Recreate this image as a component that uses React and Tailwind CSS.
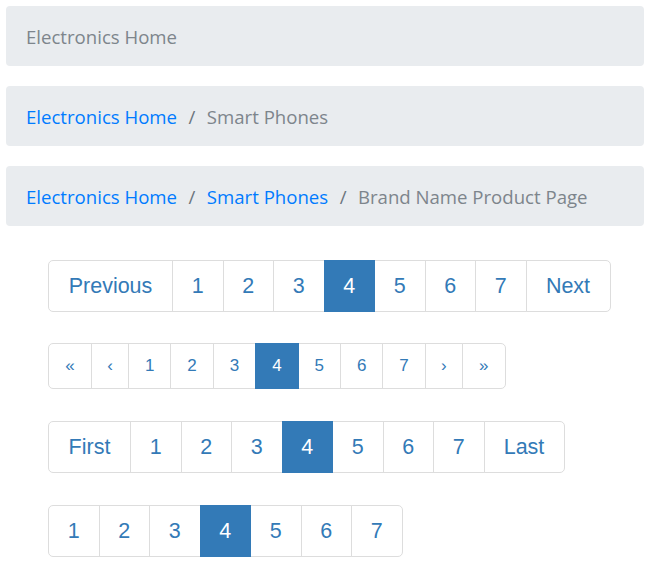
import React from 'react';

const crumbFont = { fontFamily: '"Open Sans", "Noto Sans", sans-serif' };

function Breadcrumb({ items }) {
    return (
        <nav className="h-[60px] rounded-[4px] bg-[#e9ecef] px-5 pt-[2px] flex items-center text-[18.6px]" style={crumbFont}>
            {items.map((item, i) => {
                const last = i === items.length - 1;
                return (
                    <React.Fragment key={item}>
                        {i > 0 && <span className="px-[11.5px] text-[#6c757d]">/</span>}
                        <span className={last ? 'text-[#7d858c]' : 'text-[#007bff]'}>{item}</span>
                    </React.Fragment>
                );
            })}
        </nav>
    );
}

function Pager({ items, height, textSize }) {
    return (
        <ul className={`flex ${height} ${textSize} text-[#337ab7]`} style={{ fontFamily: '"Liberation Sans", Arial, sans-serif' }}>
            {items.map((it, i) => {
                const first = i === 0;
                const last = i === items.length - 1;
                return (
                    <li
                        key={i}
                        className={[
                            'flex items-center justify-center border shrink-0',
                            it.w,
                            i > 0 ? '-ml-px' : '',
                            first ? 'rounded-l-[5px]' : '',
                            last ? 'rounded-r-[5px]' : '',
                            it.active
                                ? 'bg-[#337ab7] border-[#337ab7] text-white relative z-10'
                                : 'bg-white border-[#dddddd]',
                        ].join(' ')}
                    >
                        {it.label}
                    </li>
                );
            })}
        </ul>
    );
}

const nums = (w) =>
    [1, 2, 3, 4, 5, 6, 7].map((n) => ({ label: String(n), w, active: n === 4 }));

export default function App() {
    return (
        <div className="bg-white min-h-screen pt-[6px] px-[6px]">
            <div className="w-[638px] flex flex-col gap-5">
                <Breadcrumb items={['Electronics Home']} />
                <Breadcrumb items={['Electronics Home', 'Smart Phones']} />
                <Breadcrumb items={['Electronics Home', 'Smart Phones', 'Brand Name Product Page']} />
            </div>

            <div className="pl-[42px] pt-[34px] flex flex-col">
                <Pager
                    height="h-[52px]"
                    textSize="text-[21.5px]"
                    items={[
                        { label: 'Previous', w: 'w-[125px]' },
                        ...nums('w-[51.5px]'),
                        { label: 'Next', w: 'w-[85px]' },
                    ]}
                />
                <div className="mt-[31px]">
                    <Pager
                        height="h-[46px]"
                        textSize="text-[17px]"
                        items={[
                            { label: '«', w: 'w-[44px]' },
                            { label: '‹', w: 'w-[38px]' },
                            ...nums('w-[43.4px]'),
                            { label: '›', w: 'w-[38px]' },
                            { label: '»', w: 'w-[44px]' },
                        ]}
                    />
                </div>
                <div className="mt-8">
                    <Pager
                        height="h-[52px]"
                        textSize="text-[21.5px]"
                        items={[
                            { label: 'First', w: 'w-[83px]' },
                            ...nums('w-[51.5px]'),
                            { label: 'Last', w: 'w-[81px]' },
                        ]}
                    />
                </div>
                <div className="mt-8">
                    <Pager height="h-[52px]" textSize="text-[21.5px]" items={nums('w-[51.5px]')} />
                </div>
            </div>
        </div>
    );
}
